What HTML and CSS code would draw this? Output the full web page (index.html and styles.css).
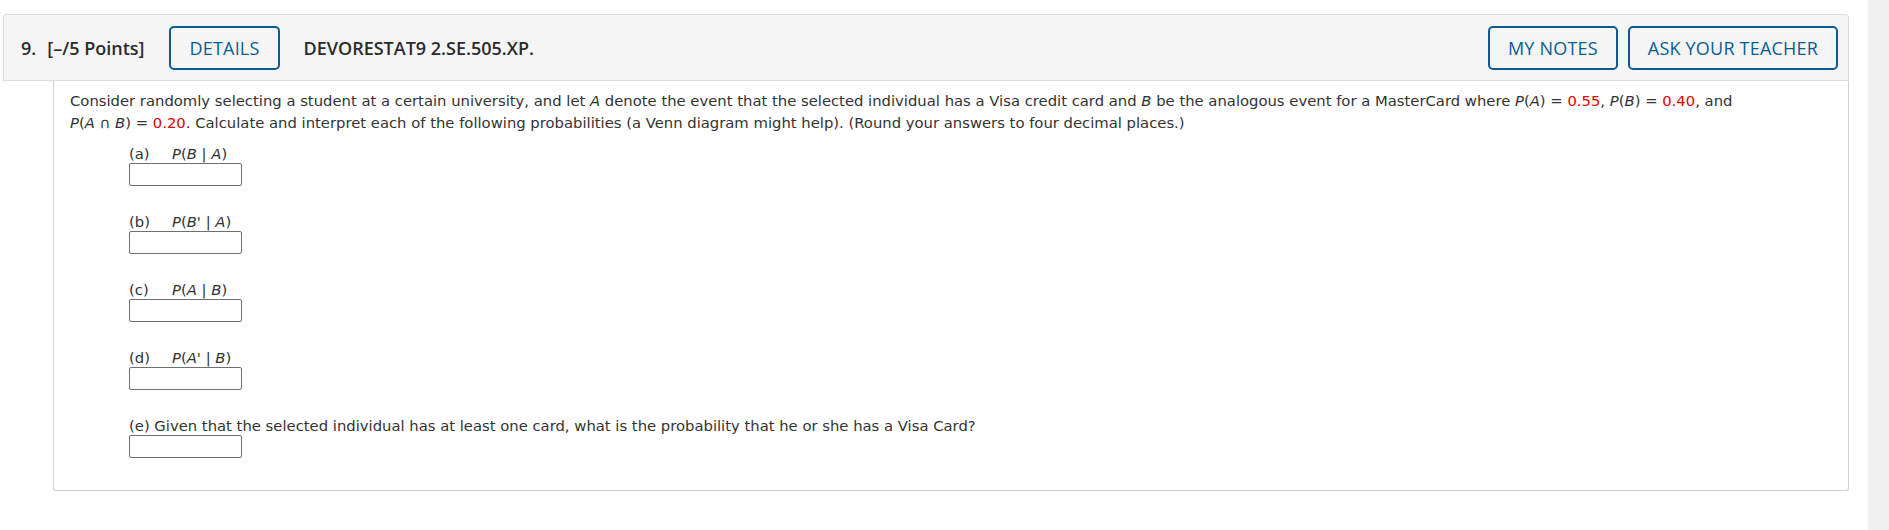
FILE: index.html
```html
<!DOCTYPE html>
<html lang="en">
<head>
<meta charset="utf-8">
<title>Question 9</title>
<link rel="stylesheet" href="styles.css">
</head>
<body>
<div class="page">
  <main class="main">
    <section class="question">
      <header class="q-header">
        <span class="q-num">9.</span>
        <span class="q-points">[–/5 Points]</span>
        <button class="btn btn-details" type="button">DETAILS</button>
        <span class="q-id">DEVORESTAT9 2.SE.505.XP.</span>
        <span class="spacer"></span>
        <button class="btn" type="button">MY NOTES</button>
        <button class="btn" type="button">ASK YOUR TEACHER</button>
      </header>
      <div class="q-body">
        <p class="prompt">Consider randomly selecting a student at a certain university, and let <i>A</i> denote the event that the selected individual has a Visa credit card and <i>B</i> be the analogous event for a MasterCard where <span class="math"><i>P</i>(<i>A</i>) = <span class="given">0.55</span>,</span> <span class="math"><i>P</i>(<i>B</i>) = <span class="given">0.40</span>,</span> and <span class="math"><i>P</i>(<i>A</i> ∩ <i>B</i>) = <span class="given">0.20</span>.</span> Calculate and interpret each of the following probabilities (a Venn diagram might help). (Round your answers to four decimal places.)</p>
        <div class="parts">
          <div class="part">
            <div class="part-label"><span class="letter">(a)</span><i>P</i>(<i>B</i> | <i>A</i>)</div>
            <input class="answer" type="text">
          </div>
          <div class="part">
            <div class="part-label"><span class="letter">(b)</span><i>P</i>(<i>B'</i> | <i>A</i>)</div>
            <input class="answer" type="text">
          </div>
          <div class="part">
            <div class="part-label"><span class="letter">(c)</span><i>P</i>(<i>A</i> | <i>B</i>)</div>
            <input class="answer" type="text">
          </div>
          <div class="part">
            <div class="part-label"><span class="letter">(d)</span><i>P</i>(<i>A'</i> | <i>B</i>)</div>
            <input class="answer" type="text">
          </div>
          <div class="part">
            <div class="part-label">(e) Given that the selected individual has at least one card, what is the probability that he or she has a Visa Card?</div>
            <input class="answer" type="text">
          </div>
        </div>
      </div>
    </section>
  </main>
  <div class="scrollbar"></div>
</div>
</body>
</html>
```

FILE: styles.css
```css
html, body {
  margin: 0;
  padding: 0;
  background: #ffffff;
}

.page {
  display: flex;
  min-height: 530px;
}

.main {
  flex: 1;
  padding: 14px 19px 0 3px;
}

.scrollbar {
  width: 21px;
  background: #f0f0f0;
}

.q-header {
  display: flex;
  align-items: center;
  height: 65px;
  border: 1px solid #dcdcdc;
  border-radius: 3px 3px 0 0;
  background: #f5f5f5;
  padding: 0 10px 0 17px;
  font-family: "Open Sans", "Liberation Sans", sans-serif;
  color: #2b2b2b;
}

.q-num,
.q-points,
.q-id {
  font-weight: 600;
  font-size: 18px;
}

.q-points {
  margin-left: 11px;
}

.btn {
  font-family: "Open Sans", "Liberation Sans", sans-serif;
  font-size: 18px;
  letter-spacing: 0.2px;
  color: #0b5c94;
  background: transparent;
  border: 2px solid #0b5c94;
  border-radius: 5px;
  height: 44px;
  padding: 0 18px;
  margin: 0;
}

.btn-details {
  margin-left: 25px;
}

.q-id {
  margin-left: 24px;
}

.spacer {
  flex: 1;
}

.btn + .btn {
  margin-left: 10px;
}

.q-body {
  margin-left: 50px;
  border: 1px solid #cfcfcf;
  border-top: none;
  border-radius: 0 0 3px 3px;
  padding: 9px 16px 32px 16px;
  font-family: "DejaVu Sans", Verdana, sans-serif;
  font-size: 14.8px;
  color: #333333;
}

.prompt {
  margin: 0;
  line-height: 22px;
}

.math {
  white-space: nowrap;
}

.given {
  color: #e60000;
}

.parts {
  padding-left: 59px;
  margin-top: 10px;
}

.part + .part {
  margin-top: 26px;
}

.part-label {
  line-height: 19px;
}

.letter {
  display: inline-block;
  width: 43px;
}

.answer {
  display: block;
  box-sizing: border-box;
  width: 113px;
  height: 23px;
  margin: 0;
  border: 1px solid #6e6e6e;
  border-radius: 2px;
  background: #ffffff;
  padding: 0 4px;
  font-family: "DejaVu Sans", Verdana, sans-serif;
  font-size: 14px;
}
```
